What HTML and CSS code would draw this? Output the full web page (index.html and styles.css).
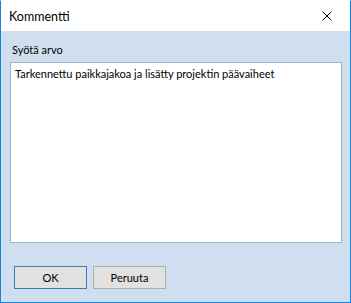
FILE: index.html
```html
<!DOCTYPE html>
<html lang="fi">
<head>
  <meta charset="UTF-8">
  <title>Kommentti</title>
  <link rel="stylesheet" href="styles.css">
</head>
<body>
  <div class="dialog">
    <div class="titlebar">
      <span class="title">Kommentti</span>
      <button class="close" aria-label="Sulje">
        <svg width="10" height="10" viewBox="0 0 10 10">
          <path d="M0.5 0.5 L9.5 9.5 M9.5 0.5 L0.5 9.5" stroke="#000" stroke-width="1" fill="none"/>
        </svg>
      </button>
    </div>
    <div class="content">
      <label class="prompt" for="comment">Syötä arvo</label>
      <textarea id="comment" class="input">Tarkennettu paikkajakoa ja lisätty projektin päävaiheet</textarea>
      <div class="actions">
        <button class="btn default">OK</button>
        <button class="btn">Peruuta</button>
      </div>
    </div>
  </div>
</body>
</html>
```
FILE: styles.css
```css
html, body {
  margin: 0;
  padding: 0;
  height: 100%;
}
body {
  font-family: Lato, "Liberation Sans", sans-serif;
  font-size: 11px;
  color: #000;
  background-color: #ffffff;
}
.dialog {
  box-sizing: border-box;
  width: 351px;
  height: 303px;
  border: 1px solid #1883d7;
  border-top-color: #ffffff;
  display: flex;
  flex-direction: column;
}
.titlebar {
  height: 30px;
  background-color: #ffffff;
  display: flex;
  align-items: center;
  justify-content: space-between;
  padding-left: 8px;
}
.title {
  font-size: 12.5px;
}
.close {
  width: 46px;
  height: 30px;
  border: none;
  background: none;
  padding: 0;
  display: flex;
  align-items: center;
  justify-content: center;
}
.content {
  flex: 1;
  background-color: #cfdff0;
  padding: 9px 8px 0 9px;
  display: flex;
  flex-direction: column;
}
.prompt {
  margin: 3px 0 0 2px;
  height: 19px;
}
.input {
  box-sizing: border-box;
  height: 181px;
  margin: 0;
  border: 1px solid #9fb4c8;
  background-color: #ffffff;
  font-family: inherit;
  font-size: 11px;
  padding: 4px 4px;
  resize: none;
  outline: none;
}
.actions {
  display: flex;
  gap: 6px;
  margin: 23px 0 0 4px;
}
.btn {
  box-sizing: border-box;
  width: 73px;
  height: 23px;
  border: 1px solid #adadad;
  background-color: #e1e1e1;
  font-family: inherit;
  font-size: 11px;
  padding: 0;
}
.btn.default {
  border-color: #3c7fb1;
}
```
